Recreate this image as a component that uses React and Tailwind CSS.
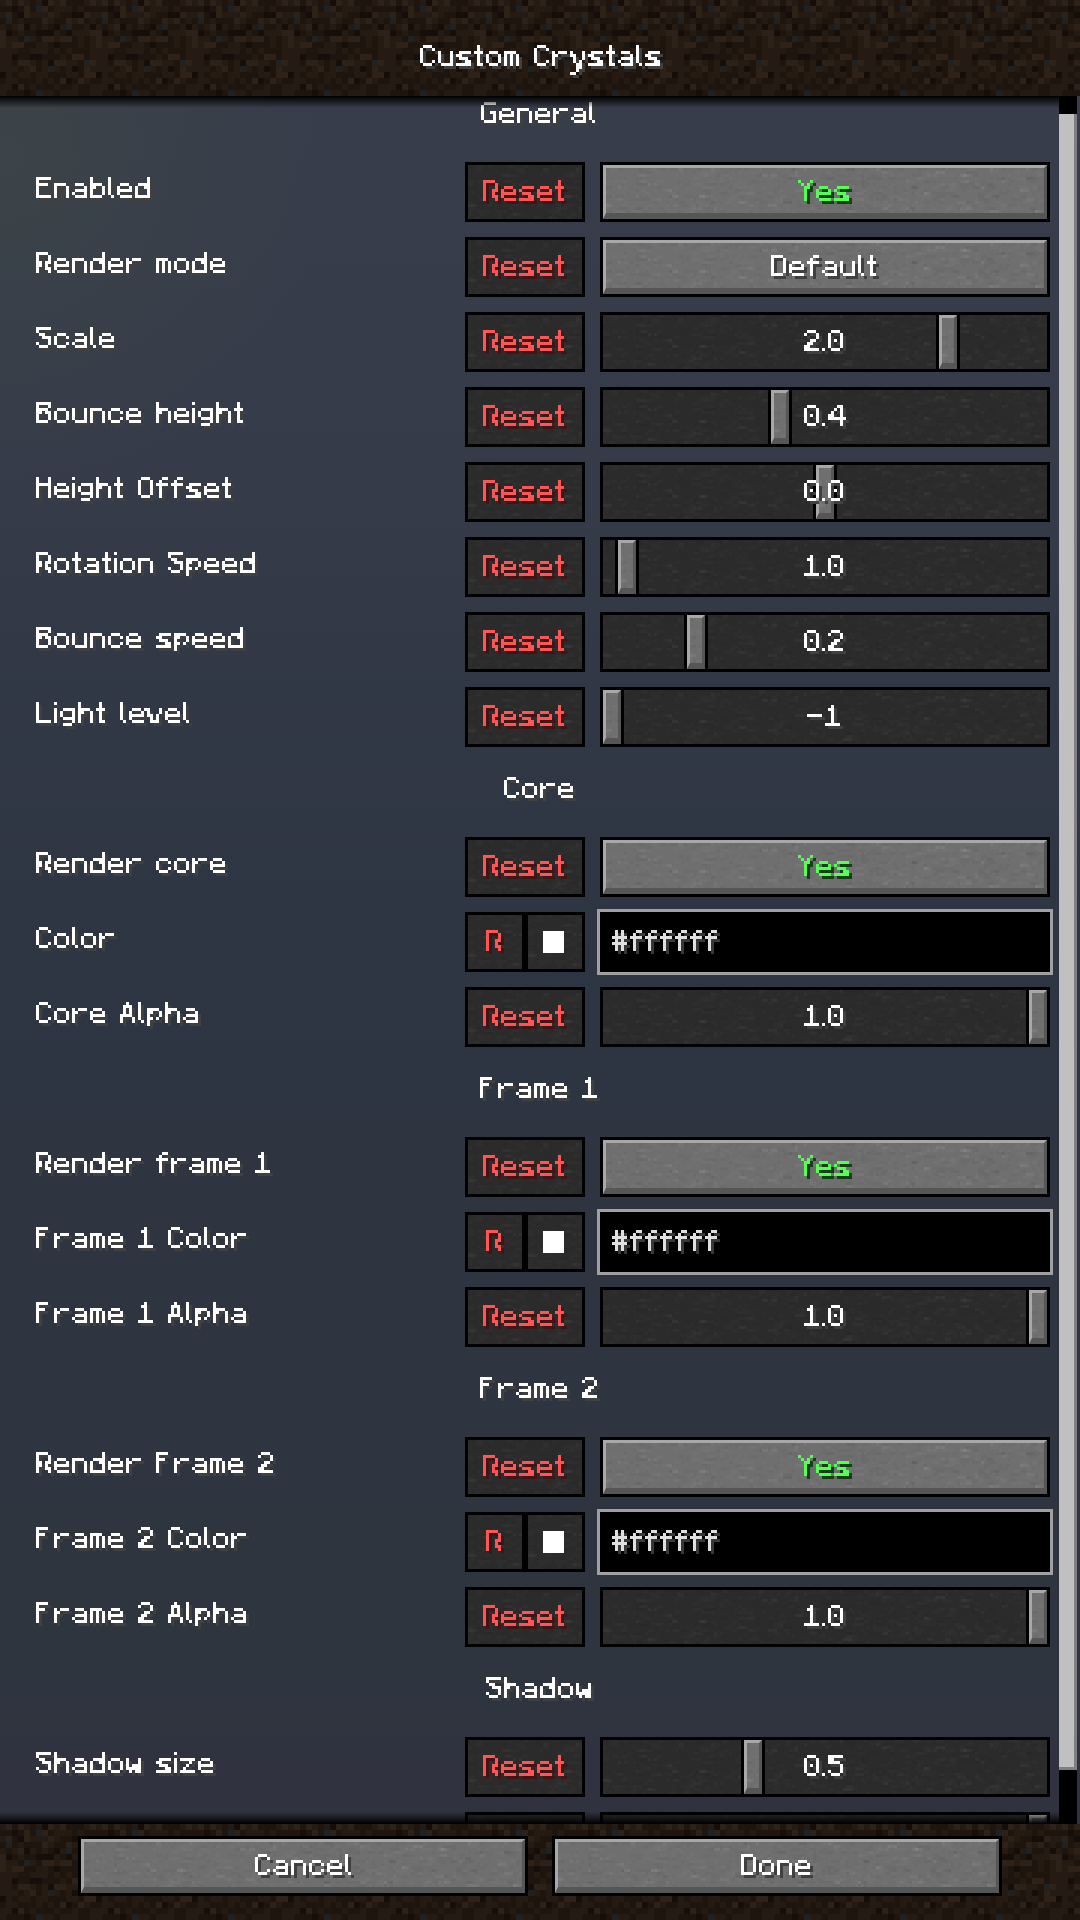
// One GUI pixel is 3 screen pixels
const GUI = 3

// Advance of each glyph in GUI pixels, everything else is 6
const ADVANCE = { i: 2, l: 3, t: 4, f: 5, " ": 4, ".": 2 }

const MONO = "'DejaVu Sans Mono'"
const DEJAVU = "'DejaVu Sans'"
const LIB_MONO = "'Liberation Mono'"
const LIB_SANS = "'Liberation Sans'"
const CJK = "'Noto Sans CJK JP'"
const OPEN = "'Open Sans'"

// Font, size, x stretch, left, top, weight that land each glyph on the 5x7 grid
const GLYPHS = {
  0: [LIB_MONO, 32, 1, -2, 0],
  1: [LIB_SANS, 30, 1, -1, 0],
  2: [LIB_SANS, 29, 1.15, -2, -1],
  4: [LIB_MONO, 32, 1.15, -2, -1],
  5: ["Roboto", 31, 1.15, -3, 0],
  A: [MONO, 28, 1, -1, 0],
  B: ["Roboto", 30, 1, -2, -1],
  C: ["Roboto", 29, 1, -2, 0],
  D: [CJK, 28, 1, -2, 0],
  E: [DEJAVU, 29, 1.15, -4, -1],
  F: [DEJAVU, 29, 1, -3, -1],
  G: [DEJAVU, 29, 0.85, -2, 0],
  H: [CJK, 29, 1, -3, -1],
  L: [LIB_MONO, 31, 1.15, -4, 0],
  O: [DEJAVU, 28, 0.85, -2, 0],
  R: [OPEN, 30, 1.15, -3, 1],
  S: [CJK, 28, 1.15, -2, -1],
  Y: [DEJAVU, 29, 0.85, 0, -1],
  a: ["Roboto", 28, 1.15, -1, 0],
  b: [CJK, 26, 1.15, -2, 0],
  c: ["Roboto", 28, 1.15, -1, 0],
  d: [MONO, 28, 1.15, -2, 1],
  e: [DEJAVU, 26, 1.15, -2, 0],
  f: [LIB_MONO, 27, 1, -2, 0],
  g: ["Inter", 25, 1, 0, -2],
  h: [OPEN, 28, 1.15, -2, 1],
  i: ["Inter", 27, 1, -2, 0],
  l: [CJK, 26, 1.15, -2, -1],
  m: [MONO, 24, 1.15, -1, 0],
  n: [OPEN, 28, 1.15, -3, 0],
  o: [CJK, 27, 1.15, -2, 0],
  p: [LIB_MONO, 24, 1.15, -1, -2],
  r: [LIB_MONO, 28, 1.3, -5, 0],
  s: [DEJAVU, 29, 1.15, -1, 1],
  t: [CJK, 29, 0.85, 0, 0, 700],
  u: [OPEN, 28, 1.15, -2, 0],
  v: [LIB_MONO, 30, 1.15, -3, 1],
  w: [LIB_MONO, 27, 1, 0, 1, 700],
  y: [CJK, 30, 1.15, -1, 2],
  z: [LIB_MONO, 28, 1.15, -2, 0],
  ".": [DEJAVU, 24, 1, -2, 0],
  "-": ["Inter", 32, 1.15, -1, -1, 700],
  "#": [CJK, 28, 1, -1, 0, 700],
}

const DIRT_COLORS = { a: "#2e2118", b: "#261b13", c: "#1e150f", d: "#150e0a", g: "#1f2223" }
const DIRT = [
  "bacabcbdabacccba",
  "ccdcacgacbbbcbcc",
  "bacdabbbabccddab",
  "cgcbcccabccabacb",
  "bcbadbcbcdbgccbd",
  "adcbccdddbcdbbba",
  "abbcgbcaabaacbcb",
  "abaaccbbcdcccbcb",
  "bbbccbbbcbcbcccb",
  "bbdccddcccbcaacb",
  "bbcaabcbdaabbcga",
  "bbbcbacbgbcbdcab",
  "dbcbbcbbcccbbcaa",
  "cbbcccbcbcadcabc",
  "bbdacbcccbccbccb",
  "bcccdcgbbcbbbccb",
]

const ROWS = [
  { type: "header", label: "General" },
  { type: "toggle", label: "Enabled", value: "Yes", on: true },
  { type: "toggle", label: "Render mode", value: "Default" },
  { type: "slider", label: "Scale", value: "2.0", left: 336 },
  { type: "slider", label: "Bounce height", value: "0.4", left: 168 },
  { type: "slider", label: "Height Offset", value: "0.0", left: 213 },
  { type: "slider", label: "Rotation Speed", value: "1.0", left: 15 },
  { type: "slider", label: "Bounce speed", value: "0.2", left: 84 },
  { type: "slider", label: "Light level", value: "-1", left: 0 },
  { type: "header", label: "Core" },
  { type: "toggle", label: "Render core", value: "Yes", on: true },
  { type: "color", label: "Color", value: "#ffffff" },
  { type: "slider", label: "Core Alpha", value: "1.0", left: 426 },
  { type: "header", label: "Frame 1" },
  { type: "toggle", label: "Render frame 1", value: "Yes", on: true },
  { type: "color", label: "Frame 1 Color", value: "#ffffff" },
  { type: "slider", label: "Frame 1 Alpha", value: "1.0", left: 426 },
  { type: "header", label: "Frame 2" },
  { type: "toggle", label: "Render Frame 2", value: "Yes", on: true },
  { type: "color", label: "Frame 2 Color", value: "#ffffff" },
  { type: "slider", label: "Frame 2 Alpha", value: "1.0", left: 426 },
  { type: "header", label: "Shadow" },
  { type: "slider", label: "Shadow size", value: "0.5", left: 141 },
  { type: "slider", label: "", value: "", left: 426 },
]

// Seeded noise so the stone looks the same on every render
const makeNoise = (cols, rows) => {
  let seed = 7
  const rand = () => {
    seed = (seed * 16807) % 2147483647
    return seed / 2147483647
  }
  const cells = []
  for (let i = 0; i < 900; i++) {
    const light = rand() > 0.5
    cells.push({
      x: Math.floor(rand() * cols),
      y: Math.floor(rand() * rows),
      w: 1 + Math.floor(rand() * 2.5),
      fill: light ? "#fff" : "#000",
      opacity: rand() > 0.95 ? 0.06 : 0.025,
    })
  }
  return cells
}
const NOISE = makeNoise(148, 18)

const guiWidth = (text) => [...text].reduce((sum, c) => sum + (ADVANCE[c] ?? 6), 0)

const glyphStyle = (c) => {
  const width = guiWidth(c) * GUI
  if (!GLYPHS[c]) return { width }
  const [fontFamily, fontSize, stretch, left, top, fontWeight = 400] = GLYPHS[c]
  return { width, fontFamily, fontSize, left, top, fontWeight, transform: `scaleX(${stretch})` }
}

const Defs = () => (
  <svg className="absolute size-0" aria-hidden="true">
    <defs>
      <pattern id="dirt" width="96" height="96" patternUnits="userSpaceOnUse">
        {DIRT.map((row, y) => [...row].map((c, x) => (
          <rect key={`${x}-${y}`} x={x * 6} y={y * 6} width="6" height="6" fill={DIRT_COLORS[c]} shapeRendering="crispEdges" />
        )))}
      </pattern>
      <pattern id="noise" width="444" height="54" patternUnits="userSpaceOnUse">
        {NOISE.map((n, i) => (
          <rect key={i} x={n.x * 3} y={n.y * 3} width={n.w * 3} height="3" fill={n.fill} opacity={n.opacity} shapeRendering="crispEdges" />
        ))}
      </pattern>
      {/* Averages text over the 3px grid and adds the quarter-brightness drop shadow */}
      <filter id="pixel" filterUnits="userSpaceOnUse" x="-6" y="-6" width="600" height="60" colorInterpolationFilters="sRGB">
        <feConvolveMatrix in="SourceGraphic" order="3" kernelMatrix="1 1 1 1 1 1 1 1 1" divisor="9" edgeMode="none" result="mean" />
        <feFlood x="-5" y="-5" width="1" height="1" floodColor="#000" />
        <feComposite x="-6" y="-6" width="3" height="3" />
        <feTile result="grid" />
        <feComposite in="mean" in2="grid" operator="in" />
        <feMorphology operator="dilate" radius="1" />
        <feComponentTransfer result="face">
          <feFuncA type="discrete" tableValues="0 0 0 0 1 1 1 1 1 1" />
        </feComponentTransfer>
        <feOffset dx="3" dy="3" />
        <feColorMatrix values="0.25 0 0 0 0  0 0.25 0 0 0  0 0 0.25 0 0  0 0 0 1 0" result="shade" />
        <feMerge>
          <feMergeNode in="shade" />
          <feMergeNode in="face" />
        </feMerge>
      </filter>
    </defs>
  </svg>
)

const Texture = ({ id, className = "" }) => (
  <svg className={`absolute inset-0 w-full h-full ${className}`} aria-hidden="true">
    <rect width="100%" height="100%" fill={`url(#${id})`} />
  </svg>
)

const PixelText = ({ text, oddMargin = -GUI, className = "text-white" }) => (
  <span
    className={`relative block h-[27px] shrink-0 text-left whitespace-pre font-['DejaVu_Sans_Mono',monospace] text-[28px] leading-[29px] [filter:url(#pixel)] ${className}`}
    style={{ marginRight: guiWidth(text) % 2 ? oddMargin : 0 }}
  >
    {[...text].map((c, i) => (
      <span key={i} className="relative inline-block origin-left leading-[0]" style={glyphStyle(c)}>{c}</span>
    ))}
  </span>
)

const Bevel = () => (
  <span className="absolute inset-0 border-3 border-t-[#a8a8a8] border-l-[#a8a8a8] border-r-[#565656] border-b-6 border-b-[#565656]" />
)

const StoneButton = ({ text, className }) => (
  <button className="relative flex h-[60px] w-[450px] justify-center border-3 border-black bg-[#6f6f6f] pt-3">
    <Texture id="noise" />
    <Bevel />
    <PixelText text={text} className={className} />
  </button>
)

const DarkButton = ({ wide, children }) => (
  <button className={`relative flex h-[60px] justify-center border-3 border-black bg-[#2b2b2b] pt-3 ${wide ? "w-[120px]" : "w-[60px]"}`}>
    <Texture id="noise" className="opacity-60" />
    {children}
  </button>
)

const Slider = ({ value, left }) => (
  <div className="relative flex h-[60px] w-[450px] justify-center border-3 border-black bg-[#2b2b2b] pt-3">
    <Texture id="noise" className="opacity-60" />
    <div className="absolute top-0 h-[54px] w-6 border-x-3 border-black bg-[#6f6f6f]" style={{ left: left - 3 }}>
      <Texture id="noise" />
      <Bevel />
    </div>
    <PixelText text={value} />
  </div>
)

const Row = ({ row }) => {
  if (row.type === "header") {
    return (
      <div className="flex h-[75px] w-[1080px] justify-center pt-3">
        <PixelText text={row.label} oddMargin={1} />
      </div>
    )
  }
  return (
    <div className="flex h-[75px] pl-9">
      <div className="w-[429px] pt-3">
        <PixelText text={row.label} />
      </div>
      {row.type === "color" ? (
        <div className="flex">
          <DarkButton><PixelText text="R" className="text-[#ff5555]" /></DarkButton>
          <DarkButton><span className="relative mt-1 mr-[3px] h-[22px] w-[21px] bg-white" /></DarkButton>
        </div>
      ) : (
        <DarkButton wide>{row.label && <PixelText text="Reset" className="text-[#ff5555]" />}</DarkButton>
      )}
      <div className="ml-[15px]">
        {row.type === "toggle" && <StoneButton text={row.value} className={row.on ? "text-[#55ff55]" : "text-white"} />}
        {row.type === "slider" && <Slider value={row.value} left={row.left} />}
        {row.type === "color" && (
          <div className="-mt-[3px] -ml-[3px] h-[66px] w-[456px] border-3 border-[#a0a0a0] bg-black pt-[15px] pl-3">
            <PixelText text={row.value} className="text-[#e0e0e0]" />
          </div>
        )}
      </div>
    </div>
  )
}

const App = () => (
  <div className="flex h-[1920px] w-[1080px] flex-col overflow-hidden bg-[#2f3541]">
    <Defs />

    {/* Title bar */}
    <header className="relative flex h-24 shrink-0 justify-center bg-[#20160f] pt-[42px]">
      <Texture id="dirt" />
      <PixelText text="Custom Crystals" />
    </header>

    {/* Options list */}
    <main className="relative flex h-[1728px] shrink-0 overflow-hidden bg-[radial-gradient(circle_at_0_60px,#3c4448_0,#3b4349b0_120px,#373d4900_330px),linear-gradient(#373d4a_0,#353b48_400px,#2e3543_800px,#2e3541_1200px,#2e353f_1580px,#30333f_1660px)]">
      <div className="-mt-[9px] w-[1059px] shrink-0">
        {ROWS.map((row, i) => <Row key={i} row={row} />)}
      </div>
      <div className="h-full w-[18px] bg-black pt-[18px]">
        <div className="h-[1656px] border-r-3 border-b-3 border-[#808080] bg-[#c0c0c0]" />
      </div>
      <div className="pointer-events-none absolute top-0 left-0 h-3 w-[1059px] bg-linear-to-b from-black to-transparent" />
      <div className="pointer-events-none absolute bottom-0 left-0 h-3 w-[1059px] bg-linear-to-t from-black to-transparent" />
    </main>

    {/* Footer */}
    <footer className="relative flex h-24 shrink-0 justify-center gap-6 bg-[#20160f] pt-3">
      <Texture id="dirt" />
      <StoneButton text="Cancel" />
      <StoneButton text="Done" />
    </footer>
  </div>
)

export default App
